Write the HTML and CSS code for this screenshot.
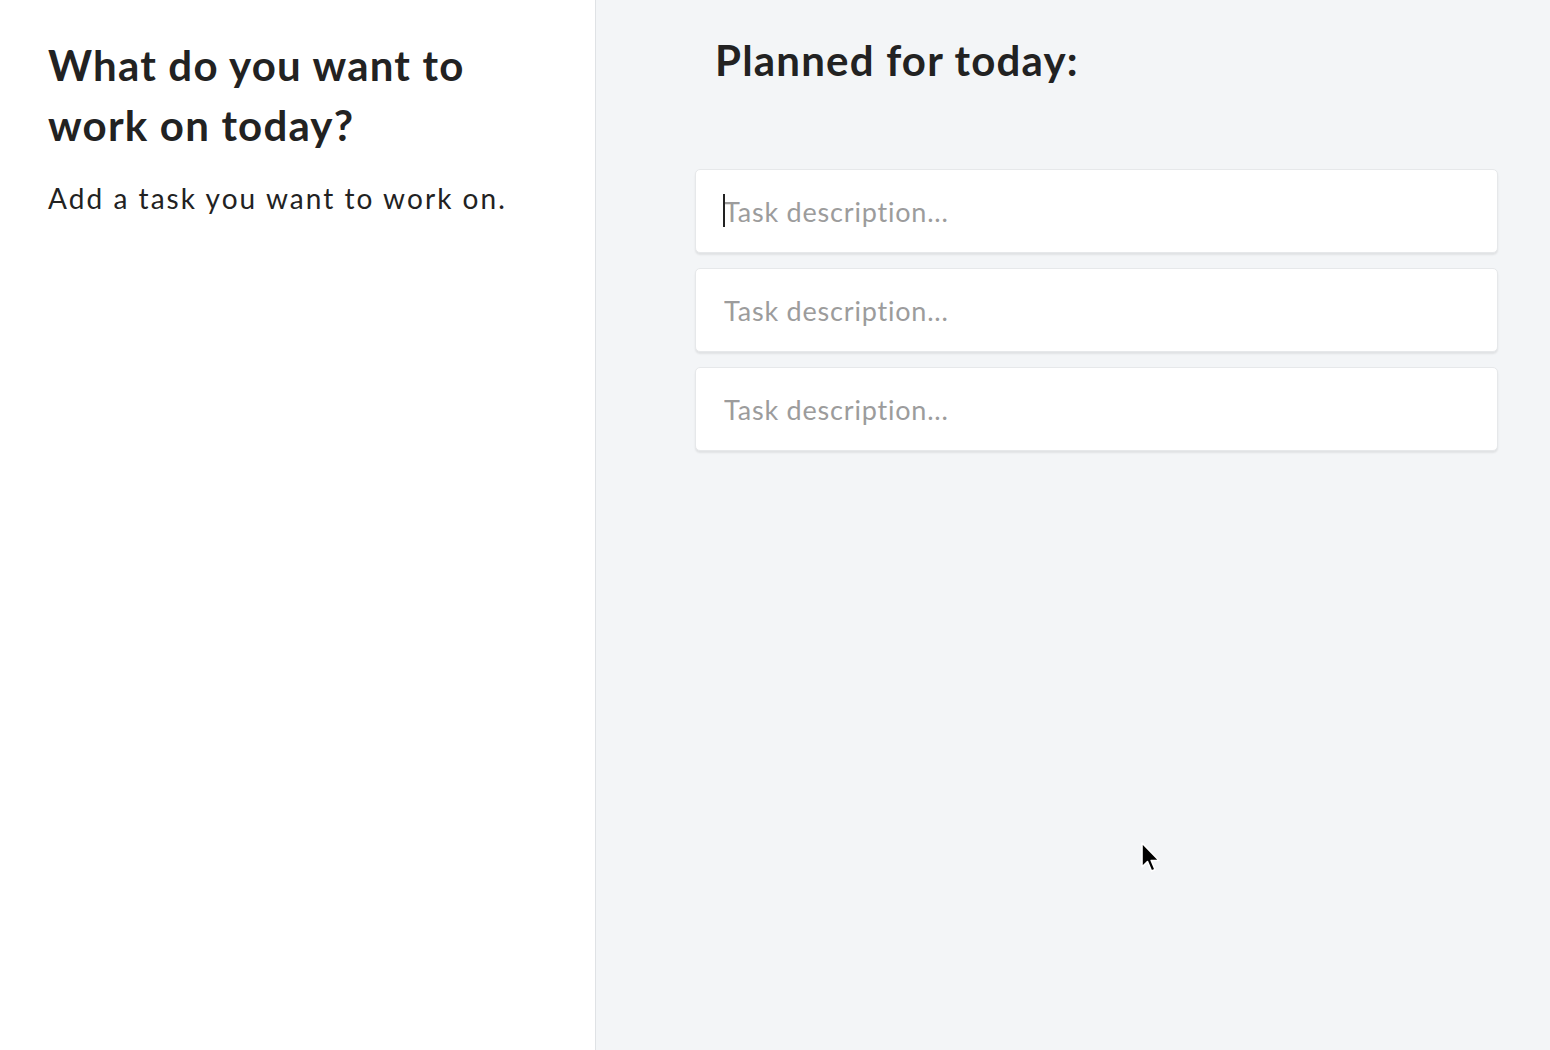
FILE: index.html
```html
<!DOCTYPE html>
<html lang="en">
<head>
<meta charset="utf-8">
<title>Planner</title>
<link rel="stylesheet" href="styles.css">
</head>
<body>
<div class="app">
  <aside class="intro">
    <h1 class="intro-title">What do you want to work on today?</h1>
    <p class="intro-text">Add a task you want to work on.</p>
  </aside>
  <main class="plan">
    <h2 class="plan-title">Planned for today:</h2>
    <div class="tasks">
      <div class="task-wrap">
        <input class="task" type="text" placeholder="Task description...">
        <span class="caret"></span>
      </div>
      <input class="task" type="text" placeholder="Task description...">
      <input class="task" type="text" placeholder="Task description...">
    </div>
  </main>
</div>
<svg class="pointer" width="22" height="34" viewBox="0 0 22 34">
  <path d="M1 1 L1 25 L6.5 19.5 L10.5 29 L14 27.5 L10.2 18.5 L18 18.5 Z" fill="#000" stroke="#fff" stroke-width="1.6" stroke-linejoin="round"/>
</svg>
</body>
</html>
```
FILE: styles.css
```css
html, body {
  margin: 0;
  padding: 0;
  height: 100%;
}
body {
  font-family: Lato, "Noto Sans", sans-serif;
  color: #222;
  overflow: hidden;
}
.app {
  display: flex;
  height: 1050px;
}
.intro {
  width: 547px;
  flex: none;
  background: #fff;
  border-right: 1px solid #dfe2e5;
  padding: 35px 0 0 48px;
}
.intro-title {
  margin: 0;
  max-width: 470px;
  font-size: 42px;
  line-height: 60px;
  font-weight: 700;
  letter-spacing: 1.2px;
  color: #222;
}
.intro-text {
  margin: 23px 0 0;
  font-size: 28px;
  line-height: 40px;
  font-weight: 400;
  letter-spacing: 2.05px;
  color: #222;
}
.plan {
  flex: 1;
  background: #f3f5f7;
  padding: 30px 52px 0 99px;
}
.plan-title {
  margin: 0 0 0 20px;
  font-size: 42px;
  line-height: 60px;
  font-weight: 700;
  letter-spacing: 1.2px;
  color: #222;
}
.tasks {
  margin-top: 79px;
  display: flex;
  flex-direction: column;
  gap: 15px;
}
.task-wrap {
  position: relative;
}
.task {
  display: block;
  box-sizing: border-box;
  width: 100%;
  height: 84px;
  border: 1px solid #e6e8ea;
  border-radius: 5px;
  background: #fff;
  box-shadow: 0 2px 2px rgba(0,0,0,0.08);
  padding: 0 28px;
  font-family: Lato, "Noto Sans", sans-serif;
  font-size: 27px;
  letter-spacing: 0.8px;
  color: #333;
  outline: none;
}
.task::placeholder {
  color: #9c9c9c;
}
.caret {
  position: absolute;
  left: 28px;
  top: 25px;
  width: 2px;
  height: 33px;
  background: #222;
}
.pointer {
  position: absolute;
  left: 1141px;
  top: 842px;
}
```
